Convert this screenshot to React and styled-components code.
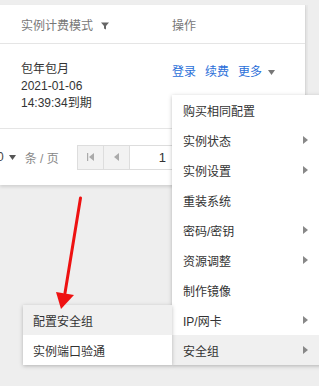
import React from "react";
import styled, { createGlobalStyle } from "styled-components";

const Global = createGlobalStyle`
  html, body { margin: 0; padding: 0; background: #eeeeee; overflow: hidden; }
  body { font-family: "Liberation Sans", "Noto Sans CJK SC", sans-serif; font-size: 12px; color: #333; }
  #root { position: relative; width: 319px; height: 386px; }
`;

const Page = styled.div`
  position: relative;
  width: 319px;
  height: 386px;
  padding-top: 5px;
  box-sizing: border-box;
`;

const Card = styled.div`
  width: 305px;
  background: #fff;
  box-shadow: 0 2px 3px rgba(0, 0, 0, 0.12), 1px 0 0 #e2e2e2, 3px 0 0 #e8e8e8;
`;

const Row = styled.div`
  display: flex;
  height: ${(p) => p.$h}px;
  padding-top: ${(p) => p.$pt || 0}px;
  border-bottom: ${(p) => (p.$last ? "none" : "1px solid #e5e5e5")};
  align-items: ${(p) => p.$align || "flex-start"};
  box-sizing: border-box;
`;

const Cell = styled.div`
  width: ${(p) => p.$w || "auto"};
  flex-shrink: 0;
  padding-left: ${(p) => p.$pl || 0}px;
  padding-top: ${(p) => p.$pt || 0}px;
  box-sizing: border-box;
  display: flex;
  gap: ${(p) => p.$gap || 0}px;
  flex-direction: ${(p) => (p.$col ? "column" : "row")};
  align-items: ${(p) => (p.$col ? "flex-start" : "center")};
`;

const HeadText = styled.span`
  color: #777;
  font-size: 12px;
  line-height: 16px;
`;

const Line = styled.div`
  line-height: 17px;
  color: #333;
  white-space: nowrap;
`;

const Link = styled.span`
  color: #2b6fd9;
  line-height: 16px;
`;

const PagerText = styled.span`
  color: #888;
  white-space: nowrap;
  display: flex;
  align-items: center;
  gap: 5px;
`;

const PagerBox = styled.div`
  display: flex;
  height: 25px;
  border: 1px solid #dddddd;
  box-sizing: border-box;
  margin-left: 18px;
`;

const PagerBtn = styled.div`
  width: 25px;
  height: 100%;
  background: #f2f2f2;
  border-right: 1px solid #dddddd;
  display: flex;
  align-items: center;
  justify-content: center;
`;

const PagerInput = styled.div`
  width: 60px;
  background: #fff;
  display: flex;
  align-items: center;
  padding-left: 29px;
  box-sizing: border-box;
  font-size: 13px;
  color: #333;
`;

const Menu = styled.div`
  position: absolute;
  left: ${(p) => p.$x}px;
  top: ${(p) => p.$y}px;
  width: ${(p) => p.$w}px;
  background: #fff;
  box-shadow: 0 1px 4px rgba(0, 0, 0, 0.25);
  z-index: ${(p) => p.$z || 2};
`;

const Item = styled.div`
  height: 30px;
  display: flex;
  align-items: center;
  justify-content: space-between;
  padding-left: ${(p) => p.$pl}px;
  padding-right: ${(p) => p.$pr || 0}px;
  background: ${(p) => (p.$active ? "#f0f0f0" : "#fff")};
  color: #333;
  font-size: 12px;
  white-space: nowrap;
`;

const ArrowOverlay = styled.svg`
  position: absolute;
  left: 0;
  top: 0;
  z-index: 5;
  pointer-events: none;
`;

const Caret = ({ color = "#666" }) => (
  <svg width="7" height="5" viewBox="0 0 7 5">
    <path d="M0 0 H7 L3.5 5 Z" fill={color} />
  </svg>
);

const RightTri = () => (
  <svg width="5" height="8" viewBox="0 0 5 8">
    <path d="M0 0 L5 4 L0 8 Z" fill="#888" />
  </svg>
);

const mainItems = [
  ["购买相同配置", false],
  ["实例状态", true],
  ["实例设置", true],
  ["重装系统", false],
  ["密码/密钥", true],
  ["资源调整", true],
  ["制作镜像", false],
  ["IP/网卡", true],
  ["安全组", true],
];

export default function App() {
  return (
    <Page>
      <Global />
      <Card>
        <Row $h={39} $pt={4} $align="center">
          <Cell $w="172px" $pl={21} $gap={8}>
            <HeadText>实例计费模式</HeadText>
            <svg width="8" height="8" viewBox="0 0 8 8">
              <path d="M0 0.5 H8 L5 4 V7.5 L3 6.5 V4 Z" fill="#666" />
            </svg>
          </Cell>
          <Cell>
            <HeadText>操作</HeadText>
          </Cell>
        </Row>
        <Row $h={85}>
          <Cell $w="172px" $pl={21} $pt={17} $col>
            <Line>包年包月</Line>
            <Line>2021-01-06</Line>
            <Line>14:39:34到期</Line>
          </Cell>
          <Cell $pt={20} $gap={9}>
            <Link>登录</Link>
            <Link>续费</Link>
            <Link>更多</Link>
            <span style={{ marginLeft: -3, display: "flex" }}>
              <Caret color="#777" />
            </span>
          </Cell>
        </Row>
        <Row $h={56} $align="center" $last>
          <Cell>
            <PagerText>
              <span style={{ marginLeft: -3, color: "#444" }}>0</span>
              <Caret color="#555" />
              <span style={{ marginLeft: 4 }}>条 / 页</span>
            </PagerText>
            <PagerBox>
              <PagerBtn>
                <svg width="7" height="8" viewBox="0 0 7 8">
                  <rect x="0" y="0" width="1.2" height="8" fill="#aaa" />
                  <path d="M7 0 V8 L2 4 Z" fill="#aaa" />
                </svg>
              </PagerBtn>
              <PagerBtn>
                <svg width="5" height="8" viewBox="0 0 5 8">
                  <path d="M5 0 V8 L0 4 Z" fill="#aaa" />
                </svg>
              </PagerBtn>
              <PagerInput>1</PagerInput>
            </PagerBox>
          </Cell>
        </Row>
      </Card>

      <Menu $x={172} $y={95} $w={160}>
        {mainItems.map(([t, sub], i) => (
          <Item key={t} $pl={11} $pr={24} $active={i === 8}>
            <span>{t}</span>
            {sub && <RightTri />}
          </Item>
        ))}
      </Menu>

      <Menu $x={23} $y={305} $w={149} $z={3}>
        <Item $pl={10} $active>
          配置安全组
        </Item>
        <Item $pl={10}>实例端口验通</Item>
      </Menu>

      <ArrowOverlay width="319" height="386" viewBox="0 0 319 386">
        <line x1="80.5" y1="198" x2="65" y2="293" stroke="#ee1111" strokeWidth="3" strokeLinecap="round" />
        <path d="M56 292 L74 295 L61 309 Z" fill="#ee1111" />
      </ArrowOverlay>
    </Page>
  );
}
